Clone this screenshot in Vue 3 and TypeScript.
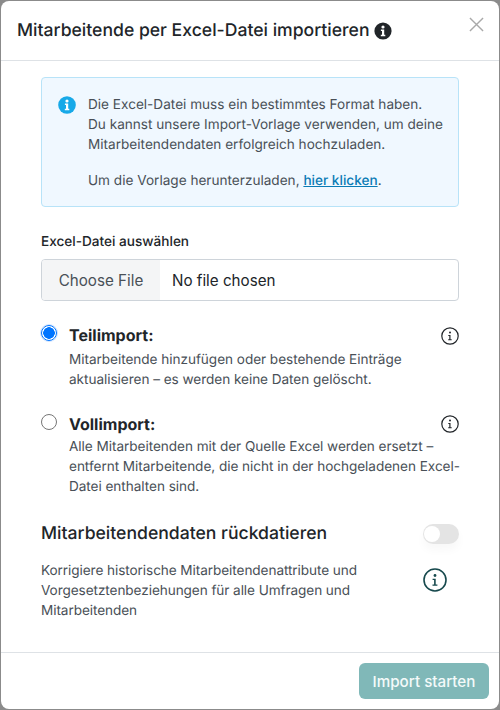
<script setup lang="ts">
import { ref } from 'vue'

const mode = ref<'partial' | 'full'>('partial')
const backdate = ref(false)
</script>

<template>
  <div class="page">
    <section class="modal">
      <header class="head">
        <h1 class="title">Mitarbeitende per Excel-Datei importieren</h1>
        <svg class="title-icon" viewBox="0 0 18 18" aria-hidden="true">
          <circle cx="9" cy="9" r="8.6" fill="#212529" />
          <circle cx="9" cy="5" r="1.6" fill="#fff" />
          <path d="M6.9 7.5h3.3v5.2h1.1v1.6H6.8v-1.6h1.2V9.1H6.9z" fill="#fff" />
        </svg>
        <button class="close" aria-label="Schließen">
          <svg viewBox="0 0 16 16"><path d="M1 1l14 14M15 1L1 15" stroke="#a9a9a9" stroke-width="1.5" fill="none" /></svg>
        </button>
      </header>

      <div class="body">
        <div class="alert">
          <svg class="alert-icon" viewBox="0 0 18 18" aria-hidden="true">
            <circle cx="9" cy="9" r="8.8" fill="#17a9e8" />
            <circle cx="9" cy="5" r="1.6" fill="#fff" />
            <path d="M6.9 7.5h3.3v5.2h1.1v1.6H6.8v-1.6h1.2V9.1H6.9z" fill="#fff" />
          </svg>
          <div class="alert-text">
            <p>Die Excel-Datei muss ein bestimmtes Format haben.<br />Du kannst unsere Import-Vorlage verwenden, um deine Mitarbeitendendaten erfolgreich hochzuladen.</p>
            <p class="alert-second">Um die Vorlage herunterzuladen, <a href="#" class="link">hier klicken</a>.</p>
          </div>
        </div>

        <label class="file-label" for="file">Excel-Datei auswählen</label>
        <input id="file" class="file" type="file" />

        <div class="option first">
          <input v-model="mode" class="radio" type="radio" name="mode" value="partial" />
          <div class="option-main">
            <div class="option-title">Teilimport:</div>
            <p class="option-text">Mitarbeitende hinzufügen oder bestehende Einträge aktualisieren – es werden keine Daten gelöscht.</p>
          </div>
          <svg class="line-icon" viewBox="0 0 18 18" aria-hidden="true">
            <circle cx="9" cy="9" r="8.2" fill="none" stroke="#212529" stroke-width="1.2" />
            <circle cx="9" cy="5.6" r="1" fill="#212529" />
            <path d="M7.3 8h2.2v4.2h1.2v1H7.2v-1h1.1V9H7.3z" fill="#212529" />
          </svg>
        </div>

        <div class="option second">
          <input v-model="mode" class="radio" type="radio" name="mode" value="full" />
          <div class="option-main">
            <div class="option-title">Vollimport:</div>
            <p class="option-text">Alle Mitarbeitenden mit der Quelle Excel werden ersetzt – entfernt Mitarbeitende, die nicht in der hochgeladenen Excel-Datei enthalten sind.</p>
          </div>
          <svg class="line-icon" viewBox="0 0 18 18" aria-hidden="true">
            <circle cx="9" cy="9" r="8.2" fill="none" stroke="#212529" stroke-width="1.2" />
            <circle cx="9" cy="5.6" r="1" fill="#212529" />
            <path d="M7.3 8h2.2v4.2h1.2v1H7.2v-1h1.1V9H7.3z" fill="#212529" />
          </svg>
        </div>

        <div class="backdate-head">
          <h2 class="backdate-title">Mitarbeitendendaten rückdatieren</h2>
          <button class="switch" :class="{ on: backdate }" aria-label="Rückdatieren" @click="backdate = !backdate"><span class="knob"></span></button>
        </div>
        <div class="backdate-row">
          <p class="backdate-text">Korrigiere historische Mitarbeitendenattribute und Vorgesetztenbeziehungen für alle Umfragen und Mitarbeitenden</p>
          <svg class="teal-icon" viewBox="0 0 24 24" aria-hidden="true">
            <circle cx="12" cy="12" r="11" fill="none" stroke="#17494d" stroke-width="1.6" />
            <circle cx="12" cy="7.5" r="1.4" fill="#17494d" />
            <path d="M9.6 10.7h3.1v5.8h1.7v1.3H9.5v-1.3h1.6v-4.5H9.6z" fill="#17494d" />
          </svg>
        </div>
      </div>

      <footer class="foot">
        <button class="primary" disabled>Import starten</button>
      </footer>
    </section>
  </div>
</template>

<style>
html, body { margin: 0; background: #8b8b8b; }
</style>

<style scoped>
.page {
  width: 500px;
  height: 710px;
  padding: 1px 1px 0;
  box-sizing: border-box;
  background: #8b8b8b;
  font-family: Inter, "Noto Sans", sans-serif;
  text-rendering: geometricPrecision;
  overflow: hidden;
}
.modal {
  height: 708px;
  background: #fff;
  border-radius: 8px;
  display: flex;
  flex-direction: column;
  color: #212529;
}
.head {
  height: 60px;
  flex: none;
  box-sizing: border-box;
  border-bottom: 1px solid #dee2e6;
  padding: 0 0 0 16px;
  display: flex;
  align-items: center;
  gap: 5px;
  position: relative;
}
.title { margin: 0; font-size: 17.6px; line-height: 60px; font-weight: 500; white-space: nowrap; }
.title-icon { width: 18px; height: 18px; flex: none; }
.close {
  position: absolute;
  top: 16px;
  right: 15px;
  width: 15px;
  height: 15px;
  padding: 0;
  border: 0;
  background: none;
}
.close svg { display: block; width: 15px; height: 15px; }
.body { flex: 1; padding: 16px 40px 0; min-height: 0; }
.alert {
  height: 130px;
  box-sizing: border-box;
  background: #f0f8ff;
  border: 1px solid #b8e3f8;
  border-radius: 4px;
  padding: 17px 8px 0 16px;
  display: flex;
  gap: 12px;
}
.alert-icon { width: 18px; height: 18px; flex: none; margin-top: 1px; }
.alert-text { font-size: 13.6px; line-height: 20px; color: #495057; }
.alert-text p { margin: 0; }
.alert-text .alert-second { margin-top: 16px; }
.link { color: #0a7bb5; font-weight: 500; }
.file-label { display: block; margin-top: 27px; font-size: 13.6px; line-height: 16px; font-weight: 500; }
.file {
  display: block;
  width: 100%;
  height: 42px;
  margin-top: 9px;
  box-sizing: border-box;
  border: 1px solid #ced4da;
  border-radius: 4px;
  background: #fff;
  font: 400 15.2px/40px Inter, sans-serif;
  color: #212529;
  padding: 0;
}
.file::file-selector-button {
  height: 40px;
  width: 118px;
  margin: 0 12px 0 0;
  border: 0;
  background: #f4f5f6;
  color: #495057;
  font: inherit;
}
.option { display: flex; align-items: flex-start; position: relative; }
.option.first { margin-top: 24px; }
.option.second { margin-top: 24px; }
.radio {
  appearance: none;
  -webkit-appearance: none;
  width: 16px;
  height: 16px;
  margin: 0 12px 0 0;
  flex: none;
  border: 1px solid #767676;
  border-radius: 50%;
  background: #fff;
  box-sizing: border-box;
}
.radio:checked {
  border: 1px solid #0075ff;
  background: radial-gradient(circle, #0075ff 0 5.5px, #fff 6px);
  box-shadow: 0 0 0 1px #cfe3ff;
}
.option-main { flex: 1; min-width: 0; margin-right: -6px; }
.option-title { font-size: 16px; line-height: 20px; font-weight: 700; color: #212529; }
.option-text { margin: 5px 0 0; font-size: 13.6px; line-height: 20px; letter-spacing: -0.05px; color: #495057; }
.option.second .option-text { margin-top: 3px; }
.line-icon { position: absolute; top: 2px; right: 0; width: 18px; height: 18px; }
.option.second .line-icon { top: 1px; }
.backdate-head {
  margin-top: 25px;
  display: flex;
  align-items: center;
  justify-content: space-between;
  height: 24px;
}
.backdate-title { margin: 0; font-size: 17.6px; line-height: 24px; font-weight: 500; }
.switch {
  position: relative;
  width: 36px;
  height: 20px;
  padding: 0;
  border: 0;
  border-radius: 10px;
  background: #e4e4e4;
  box-shadow: 0 6px 10px rgba(0, 0, 0, 0.03);
}
.knob {
  position: absolute;
  left: 1px;
  top: 2px;
  width: 16px;
  height: 16px;
  border-radius: 50%;
  background: #fff;
}
.backdate-row { display: flex; align-items: flex-start; margin-top: 15px; }
.backdate-text { margin: 0; width: 340px; font-size: 13.6px; line-height: 20px; letter-spacing: -0.08px; color: #495057; }
.teal-icon { width: 24px; height: 24px; flex: none; margin: 7px 0 0 42px; }
.foot {
  height: 57px;
  flex: none;
  box-sizing: border-box;
  border-top: 1px solid #dee2e6;
  display: flex;
  justify-content: flex-end;
  padding: 10px 10px 0 0;
}
.primary {
  width: 130px;
  height: 36px;
  border: 0;
  border-radius: 6px;
  background: #80b8b8;
  color: #f4fafa;
  font: 500 15.2px Inter, sans-serif;
}
</style>
